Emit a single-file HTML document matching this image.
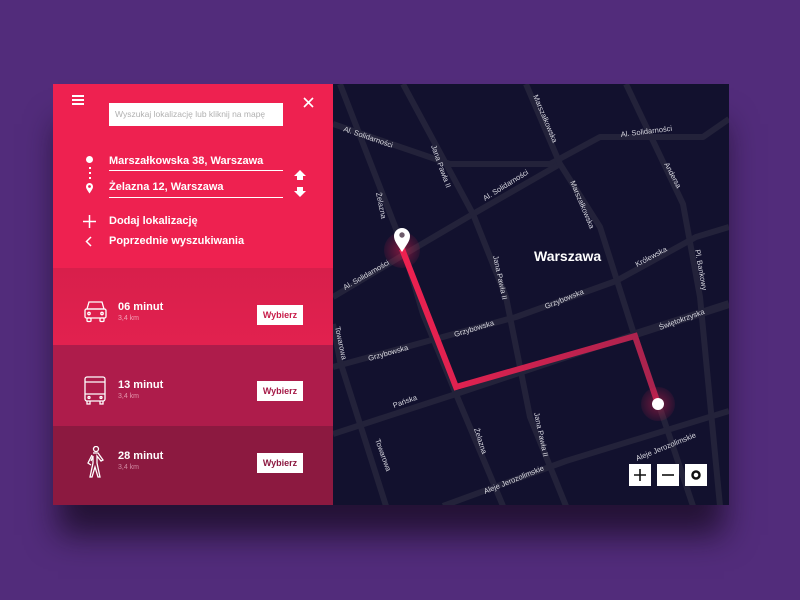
<!DOCTYPE html>
<html><head><meta charset="utf-8"><style>
*{margin:0;padding:0;box-sizing:border-box}
body{width:800px;height:600px;background:#522c7b;position:relative;overflow:hidden;font-family:"Liberation Sans",sans-serif}
.card{position:absolute;left:53px;top:84px;width:676px;height:421px;box-shadow:0 35px 30px -5px rgba(20,10,30,.75)}
.left{position:absolute;left:0;top:0;width:280px;height:421px}
.top{position:absolute;left:0;top:0;width:280px;height:184px;background:#ee2150}
.row{position:absolute;left:0;width:280px;color:#fff}
.t{position:absolute;color:#fff;font-weight:bold;font-size:11px}
.btn{position:absolute;left:204px;width:46px;height:20px;background:#fff;font-weight:bold;font-size:9px;text-align:center;line-height:20px}
.map{position:absolute;left:280px;top:0;width:396px;height:421px;background:#12112e;overflow:hidden}
.lbl{font-family:"Liberation Sans",sans-serif;font-size:7.5px;fill:#d8d8e0}
.ctl{position:absolute;top:380px;width:22px;height:22px;background:#fff}
</style></head><body>
<div class="card">
 <div class="left">
  <div class="top">
   <div style="position:absolute;left:19px;top:11px;width:12px;height:2px;background:#fff;box-shadow:0 4px 0 #fff,0 8px 0 #fff"></div>
   <svg style="position:absolute;left:250px;top:13px" width="11" height="11"><path d="M1 1L10 10M10 1L1 10" stroke="#fff" stroke-width="1.6"/></svg>
   <div style="position:absolute;left:56px;top:19px;width:174px;height:23px;background:#fff;color:#b0b0b0;font-size:8.5px;line-height:23px;padding-left:6px;white-space:nowrap">Wyszukaj lokalizację lub kliknij na mapę</div>
   <div style="position:absolute;left:33px;top:72px;width:7px;height:7px;border-radius:50%;background:#fff"></div>
   <div style="position:absolute;left:35.5px;top:83px;width:2px;height:2px;background:#fff;box-shadow:0 5px 0 #fff,0 10px 0 #fff"></div>
   <svg style="position:absolute;left:32px;top:98px" width="9" height="12"><path d="M4.5 11.5C1.5 7 1 6 1 4.5a3.5 3.5 0 0 1 7 0C8 6 7.5 7 4.5 11.5Z" fill="#fff"/><circle cx="4.5" cy="4.5" r="1.4" fill="#ee2150"/></svg>
   <div class="t" style="left:56px;top:71px;font-weight:600">Marszałkowska 38, Warszawa</div>
   <div style="position:absolute;left:56px;top:86px;width:174px;height:1px;background:#fff"></div>
   <div class="t" style="left:56px;top:97px;font-weight:600">Żelazna 12, Warszawa</div>
   <div style="position:absolute;left:56px;top:113px;width:174px;height:1px;background:#fff"></div>
   <svg style="position:absolute;left:241px;top:86px" width="12" height="28"><path d="M6 0L12 6H9V10H3V6H0Z M3 17H9V21H12L6 27L0 21H3Z" fill="#fff"/></svg>
   <svg style="position:absolute;left:30px;top:131px" width="13" height="13"><path d="M6.5 0V13M0 6.5H13" stroke="#fff" stroke-width="1.5"/></svg>
   <div class="t" style="left:56px;top:131px;font-weight:600">Dodaj lokalizację</div>
   <svg style="position:absolute;left:32px;top:152px" width="7" height="11"><path d="M6 1L1.5 5.5L6 10" stroke="#fff" stroke-width="1.5" fill="none"/></svg>
   <div class="t" style="left:56px;top:151px;font-weight:600">Poprzednie wyszukiwania</div>
  </div>
  <div class="row" style="top:184px;height:77px;background:linear-gradient(#d81f4b,#e2214f)">
   <svg style="position:absolute;left:31px;top:33px" width="23" height="22" fill="none" stroke="#fff" stroke-width="1.3"><path d="M5 1H18L20 8H3Z"/><rect x="1" y="8" width="21" height="9" rx="1.5"/><rect x="3" y="17" width="4" height="3.5" rx="1"/><rect x="16" y="17" width="4" height="3.5" rx="1"/><circle cx="5" cy="12.5" r="1.2"/><circle cx="18" cy="12.5" r="1.2"/></svg>
   <div class="t" style="left:65px;top:33px">06 minut</div>
   <div style="position:absolute;left:65px;top:47px;font-size:7px;color:#f2a0b6">3,4 km</div>
   <div class="btn" style="top:37px;color:#c81c49">Wybierz</div>
  </div>
  <div class="row" style="top:261px;height:81px;background:#ae1c4b">
   <svg style="position:absolute;left:31px;top:31px" width="22" height="30" fill="none" stroke="#fff" stroke-width="1.3"><rect x="1" y="1" width="20" height="24" rx="2"/><path d="M1 6H21M1 18H21"/><circle cx="5" cy="21.5" r="1"/><circle cx="17" cy="21.5" r="1"/><path d="M3 25V28H6V25M16 25V28H19V25"/></svg>
   <div class="t" style="left:65px;top:34px">13 minut</div>
   <div style="position:absolute;left:65px;top:48px;font-size:7px;color:#e295ab">3,4 km</div>
   <div class="btn" style="top:36px;color:#a51a47">Wybierz</div>
  </div>
  <div class="row" style="top:342px;height:79px;background:#8c1940">
   <svg style="position:absolute;left:33px;top:20px" width="20" height="33" fill="none" stroke="#fff" stroke-width="1.3"><circle cx="10" cy="3" r="2.5"/><path d="M7 7H12L17 14L15 15L11 10V17L14 31H12L9 21L6 31H4L7 17V10L5 15"/><path d="M6 9L2 17L5 19"/></svg>
   <div class="t" style="left:65px;top:24px">28 minut</div>
   <div style="position:absolute;left:65px;top:38px;font-size:7px;color:#d08aa2">3,4 km</div>
   <div class="btn" style="top:27px;color:#8c1940">Wybierz</div>
  </div>
 </div>
 <div class="map">
  <svg width="396" height="421" style="position:absolute;left:0;top:0">
   <defs><linearGradient id="g" x1="0" y1="0" x2="1" y2="0"><stop offset="0" stop-color="#ee2150"/><stop offset="1" stop-color="#a8234e"/></linearGradient>
   <radialGradient id="h"><stop offset="0" stop-color="#ee2150" stop-opacity=".8"/><stop offset="1" stop-color="#ee2150" stop-opacity=".15"/></radialGradient></defs>
   <g stroke="#23223a" stroke-width="6" fill="none" stroke-linejoin="round">
    <path d="M0 40L117 80H217L267 53H370L396 35"/>
    <path d="M0 213L77 167L140 130L227 80"/>
    <path d="M7 0L70 163L90 230L123 310L170 422"/>
    <path d="M70 0L140 130L173 213L197 333L233 422"/>
    <path d="M193 0L227 80L267 143L300 247L330 333L360 422"/>
    <path d="M293 0L350 120L367 213L387 422"/>
    <path d="M0 283L183 233L283 197L363 153L396 143"/>
    <path d="M303 250L396 220" stroke-width="8"/>
    <path d="M0 350L123 310L303 250"/>
    <path d="M110 422L233 377L396 327"/>
    <path d="M0 240L7 277L53 422"/>
   </g>
   <path d="M69 165L123 303L302 252L325 320" stroke="url(#g)" stroke-width="6" fill="none" stroke-linejoin="miter"/>
   <circle cx="69" cy="166" r="18" fill="url(#h)" opacity=".6"/>
   <circle cx="325" cy="320" r="17" fill="url(#h)" opacity=".55"/>
   <circle cx="325" cy="320" r="6" fill="#fff"/>
   <path d="M69 168C64 160 61 157 61 152a8 8 0 0 1 16 0C77 157 74 160 69 168Z" fill="#fff"/>
   <circle cx="69" cy="151" r="2.7" fill="#6c5a6a"/>
   <text x="201" y="177" font-size="14" font-weight="bold" fill="#fff" font-family="Liberation Sans">Warszawa</text>
   <g class="lbl">
    <text transform="translate(10,47) rotate(19)">Al. Solidarności</text>
    <text transform="translate(288,53) rotate(-7)">Al. Solidarności</text>
    <text transform="translate(152,117) rotate(-32)">Al. Solidarności</text>
    <text transform="translate(12,206) rotate(-30)">Al. Solidarności</text>
    <text transform="translate(98,62) rotate(70)">Jana Pawła II</text>
    <text transform="translate(160,172) rotate(78)">Jana Pawła II</text>
    <text transform="translate(201,329) rotate(78)">Jana Pawła II</text>
    <text transform="translate(200,12) rotate(67)">Marszałkowska</text>
    <text transform="translate(237,98) rotate(67)">Marszałkowska</text>
    <text transform="translate(43,109) rotate(78)">Żelazna</text>
    <text transform="translate(141,345) rotate(72)">Żelazna</text>
    <text transform="translate(331,80) rotate(62)">Andersa</text>
    <text transform="translate(362,166) rotate(80)">Pl. Bankowy</text>
    <text transform="translate(304,183) rotate(-28)">Królewska</text>
    <text transform="translate(213,225) rotate(-22)">Grzybowska</text>
    <text transform="translate(122,253) rotate(-17)">Grzybowska</text>
    <text transform="translate(36,277) rotate(-16)">Grzybowska</text>
    <text transform="translate(327,246) rotate(-20)">Świętokrzyska</text>
    <text transform="translate(61,324) rotate(-20)">Pańska</text>
    <text transform="translate(304,377) rotate(-22)">Aleje Jerozolimskie</text>
    <text transform="translate(152,410) rotate(-22)">Aleje Jerozolimskie</text>
    <text transform="translate(42,356) rotate(70)">Towarowa</text>
    <text transform="translate(2,243) rotate(78)">Towarowa</text>
   </g>
  </svg>
  <div class="ctl" style="left:296px"><svg width="22" height="22"><path d="M11 5V17M5 11H17" stroke="#111" stroke-width="1.6"/></svg></div>
  <div class="ctl" style="left:324px"><svg width="22" height="22"><path d="M5 11H17" stroke="#111" stroke-width="1.6"/></svg></div>
  <div class="ctl" style="left:352px"><svg width="22" height="22"><circle cx="11" cy="11" r="3.5" fill="none" stroke="#111" stroke-width="2.5"/></svg></div>
 </div>
</div>
</body></html>
